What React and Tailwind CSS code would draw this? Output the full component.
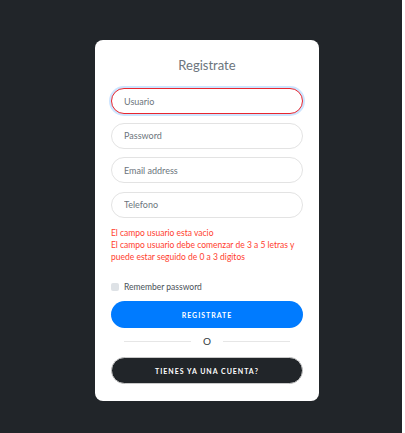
import React from 'react';

const font = { fontFamily: 'Lato, "Noto Sans", sans-serif' };

const Field = ({ placeholder, focused, type = 'text' }) => (
  <input
    type={type}
    placeholder={placeholder}
    className={`w-full h-[26px] rounded-full bg-white px-3 text-[9px] text-[#495057] placeholder:text-[#6c757d] outline-none ${
      focused
        ? 'border-[1.5px] border-[#e8262e] shadow-[0_0_0_2px_rgba(0,123,255,0.2)]'
        : 'border border-[#e3e3e3]'
    }`}
  />
);

export default function App() {
  return (
    <div className="flex h-[433px] w-full bg-white" style={font}>
      <div className="h-full w-[402px] bg-[#212529] pl-[95px] pt-[40px]">
        <div className="w-[224px] h-[361px] rounded-lg bg-white px-4 pt-[17px]">
          <h2 className="text-center text-[13px] font-normal text-[#6c757d] leading-[16px]">Registrate</h2>

          <form className="mt-[15px] flex flex-col gap-[8.5px]" onSubmit={(e) => e.preventDefault()}>
            <Field placeholder="Usuario" focused />
            <Field placeholder="Password" type="password" />
            <Field placeholder="Email address" />
            <Field placeholder="Telefono" />
          </form>

          <div className="mt-[9px] text-[8.5px] leading-[12px] text-[#ff3d2e]">
            <p>El campo usuario esta vacio</p>
            <p>El campo usuario debe comenzar de 3 a 5 letras y puede estar seguido de 0 a 3 digitos</p>
          </div>

          <label className="mt-[18px] flex items-center gap-[5px] text-[8.5px] text-[#495057]">
            <span className="inline-block h-[8px] w-[8px] rounded-[2px] bg-[#dee2e6]" />
            Remember password
          </label>

          <button className="mt-[8px] h-[27px] w-full rounded-full bg-[#007bff] text-[7px] font-bold tracking-[0.14em] text-white">
            REGISTRATE
          </button>

          <div className="mt-[6px] flex items-center px-[13px]">
            <div className="h-px flex-1 bg-[#e6e6e6]" />
            <span className="px-[12px] text-[10px] leading-[14px] text-[#343a40]">O</span>
            <div className="h-px flex-1 bg-[#e6e6e6]" />
          </div>

          <button className="mt-[9px] h-[27px] w-full rounded-full border border-[#c8c8c8] bg-[#212529] text-[7px] font-bold tracking-[0.14em] text-white">
            TIENES YA UNA CUENTA?
          </button>
        </div>
      </div>
    </div>
  );
}
